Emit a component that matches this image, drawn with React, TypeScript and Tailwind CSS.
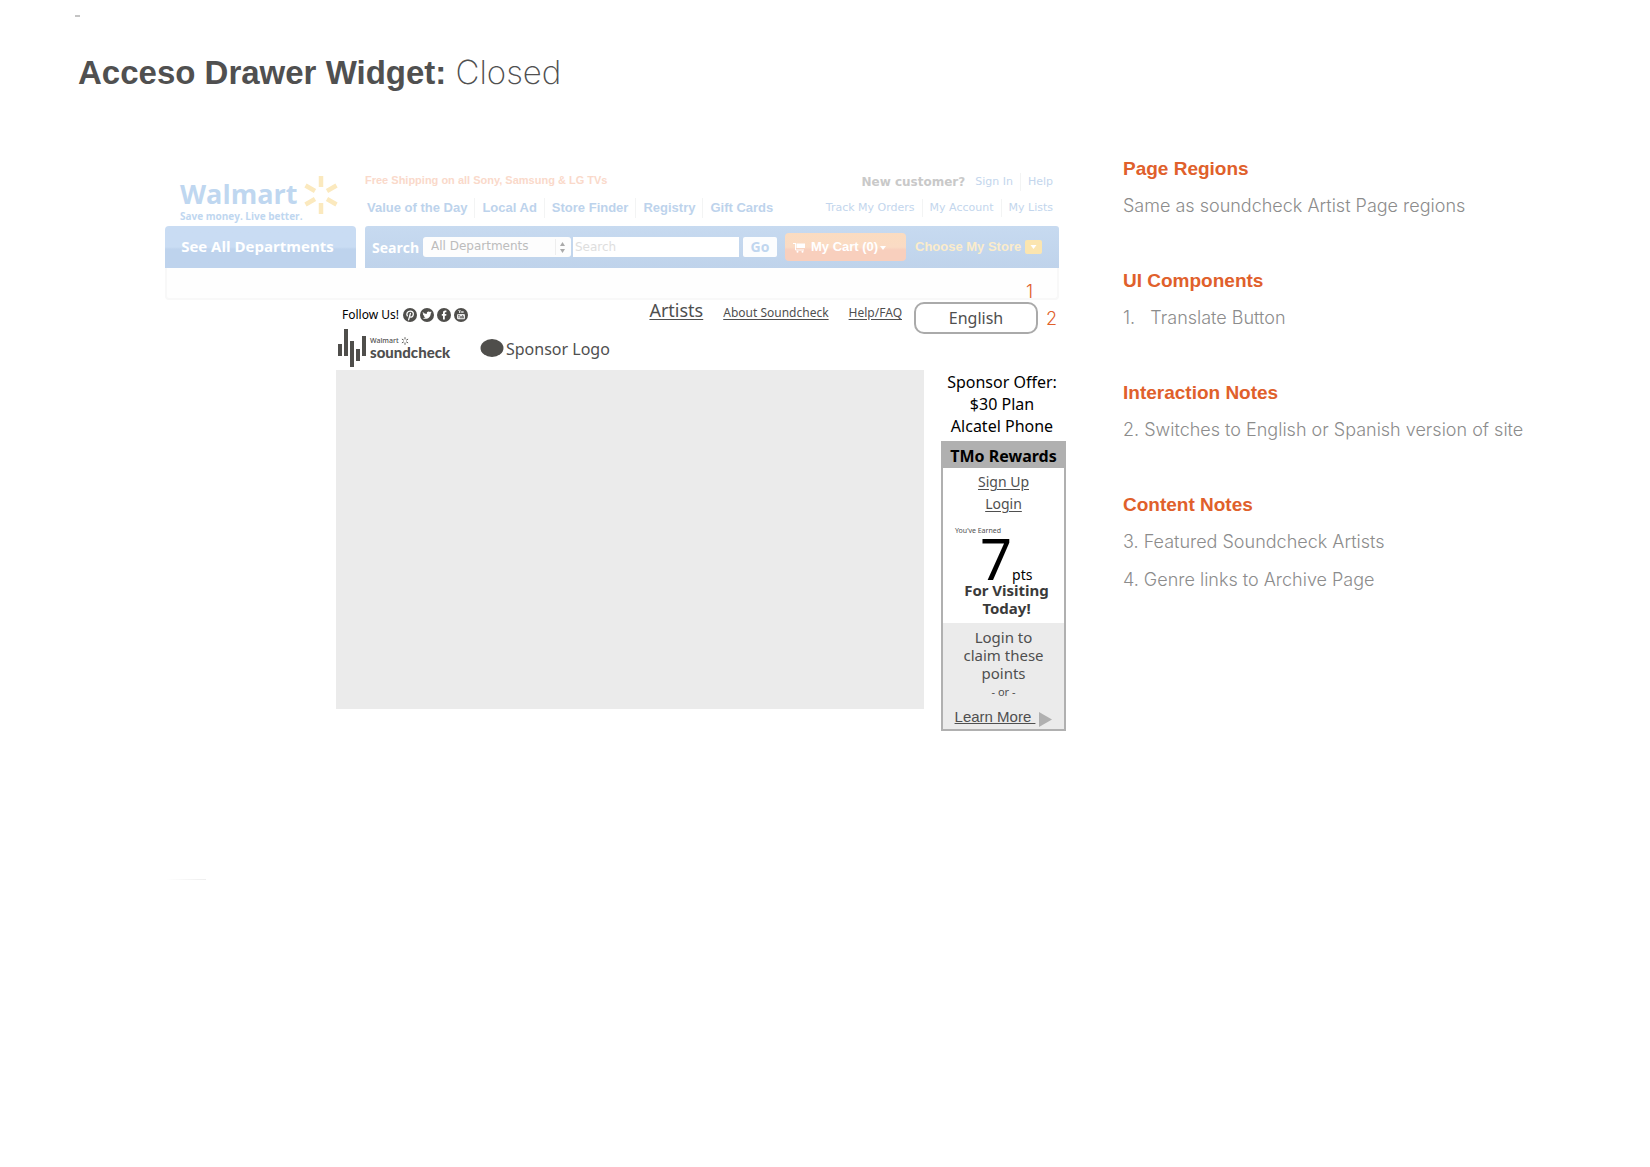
import React from "react";

const myriad = "font-['Noto_Sans',sans-serif]";
const verdana = "font-['DejaVu_Sans',sans-serif]";
const humanist = "font-['Open_Sans',sans-serif]";

function Spark({ className, color }: { className: string; color: string }) {
  return (
    <svg viewBox="0 0 36 40" className={className} aria-hidden="true">
      <g stroke={color} strokeWidth="4.5" strokeLinecap="butt">
        <path d="M18 1v11M18 28v11M2.500 10.500l9.500 5.500M24 24l9.500 5.500M2.500 29.500l9.500-5.500M24 16l9.500-5.500" />
      </g>
    </svg>
  );
}

function Divided({ items, className }: { items: string[]; className: string }) {
  return (
    <nav className={`flex items-center whitespace-nowrap ${className}`}>
      {items.map((t, i) => (
        <a key={t} href="#" className={i ? "ml-[7px] border-l border-[#f3f4f4] pl-[7px]" : ""}>
          {t}
        </a>
      ))}
    </nav>
  );
}

function StoreHeader() {
  return (
    <div className="mr-[7px]">
      <div className="flex h-[55px]">
        <div className="flex w-[200px] gap-1 pl-[15px]">
          <div className={`${humanist} text-[#bfd7f0]`}>
            <div className="mt-1 h-[34px] text-[27px] leading-[38px] font-bold">Walmart</div>
            <div className="text-[10px] leading-[14px] font-bold whitespace-nowrap">Save money. Live better.</div>
          </div>
          <Spark color="#fbe9be" className="mt-1 -ml-1 h-10 w-9 shrink-0" />
        </div>
        <div className="flex flex-1 justify-between">
          <div className="font-['Liberation_Sans',sans-serif] font-bold">
            <p className="mt-0.5 text-[11px] leading-[14px] text-[#fad9ca]">Free Shipping on all Sony, Samsung &amp; LG TVs</p>
            <Divided
              className="mt-[11px] pl-0.5 text-[13px] leading-[20px] text-[#bdd3ec]"
              items={["Value of the Day", "Local Ad", "Store Finder", "Registry", "Gift Cards"]}
            />
          </div>
          <div className={`${verdana} flex flex-col items-end pr-1.5 text-[#c3d6ed]`}>
            <div className="mt-0.5 flex items-center gap-2.5 text-[11px] leading-[18px]">
              <span className="text-[12px] font-bold text-[#c9c9c9]">New customer?</span>
              <Divided className="" items={["Sign In", "Help"]} />
            </div>
            <Divided className="mt-2 text-[11px] leading-[18px]" items={["Track My Orders", "My Account", "My Lists"]} />
          </div>
        </div>
      </div>
      <div className="flex h-[42px] gap-[9px]">
        <button className={`${humanist} w-[191px] rounded-t-[4px] bg-linear-to-b from-[#c9dcf3] from-0% via-[#c9dcf3] via-50% to-[#bed3ed] to-55% pr-1.5 pb-0.5 text-[15px] font-bold text-white`}>
          See All Departments
        </button>
        <form className="flex flex-1 items-center rounded-t-[3px] bg-linear-to-b from-[#c7daf0] to-[#bfd3eb] pl-[7px]">
          <label htmlFor="query" className={`${humanist} w-[51px] text-[14px] font-bold text-white`}>
            Search
          </label>
          <div className="relative w-[148px]">
            <select aria-label="Department" className={`${verdana} block h-5 w-full appearance-none rounded-[3px] bg-[#fdfdfd] pb-0.5 pl-2 text-[12px] text-[#bcbcbc]`}>
              <option>All Departments</option>
            </select>
            <svg viewBox="0 0 12 20" className="pointer-events-none absolute top-0 right-1 h-5 w-3" aria-hidden="true">
              <path d="M0.500 2v16" stroke="#eee" />
              <path d="M5 9l2.500-4 2.500 4zM5 12l2.500 4 2.500-4z" fill="#aaa" />
            </svg>
          </div>
          <input id="query" placeholder="Search" className={`${verdana} ml-0.5 h-5 w-[166px] min-w-0 bg-white pl-0.5 text-[12px] placeholder:text-[#dedede]`} />
          <button type="button" className={`${humanist} ml-1 h-5 w-[34px] rounded-[2px] bg-[#fcfdfe] text-[14px] leading-5 font-bold text-[#c0d6ef]`}>
            Go
          </button>
          <button type="button" className="ml-2 flex h-[28px] w-[121px] items-center gap-1.5 rounded-[4px] bg-linear-to-b from-[#fbdcc0] from-0% via-[#fadbc4] via-50% to-[#f8cfbd] to-60% pl-2 font-['Liberation_Sans',sans-serif] text-[13px] font-bold whitespace-nowrap text-white">
            <svg viewBox="0 0 12 11" className="h-[11px] w-3" aria-hidden="true">
              <path d="M0 1.500h3M2.500 1.500v6.500H11" fill="none" stroke="#fff" />
              <path d="M3.500 1.500H12V6H3.500z" fill="#fff" />
              <circle cx="4.500" cy="9.800" r="1" fill="#fff" />
              <circle cx="9.500" cy="9.800" r="1" fill="#fff" />
            </svg>
            <span>
              My Cart (0)
              <svg viewBox="0 0 6 4" className="ml-0.5 inline h-1 w-1.5 align-middle" aria-hidden="true">
                <path d="M0 0h6L3 4z" fill="#fff" />
              </svg>
            </span>
          </button>
          <button type="button" className="ml-[9px] flex items-center gap-1 font-['Liberation_Sans',sans-serif] text-[13px] font-bold whitespace-nowrap text-[#fbeccb]">
            Choose My Store
            <svg viewBox="0 0 17 14" className="h-3.5 w-[17px]" aria-hidden="true">
              <rect width="17" height="14" rx="2" fill="#fbe5b0" />
              <path d="M5.500 5h6l-3 4z" fill="#fff" />
            </svg>
          </button>
        </form>
      </div>
      <div className="h-8 rounded-b-[4px] border-x-2 border-b-2 border-[#f8f8f8] bg-[#fefefe]" />
    </div>
  );
}

function SocialIcons() {
  return (
    <div className="flex gap-[3px]">
      <a href="#" aria-label="Pinterest">
        <svg viewBox="0 0 14 14" className="size-3.5">
          <circle cx="7" cy="7" r="7" fill="#4f4e4b" />
          <path d="M4.300 7.900C3 5.700 4.600 3.100 7.200 3.100c2.100 0 3.300 1.300 3.100 3.100-.2 1.900-1.300 3-2.500 2.900-.9 0-1.300-.7-1.100-1.500M7.400 5.300L5.600 11.800" fill="none" stroke="#fff" strokeWidth="1.300" strokeLinecap="round" />
        </svg>
      </a>
      <a href="#" aria-label="Twitter">
        <svg viewBox="0 0 14 14" className="size-3.5">
          <circle cx="7" cy="7" r="7" fill="#4f4e4b" />
          <path d="M2.800 4c1.200 1.300 2.500 1.900 4 2-.3-1.600.6-2.600 1.800-2.600.6 0 1 .2 1.400.6l1.400-.5-.6 1.100.9-.2-1 1.100c.1 3-2.200 5.300-5 5.300-1.200 0-2.200-.3-3-.9 1.100.1 2-.1 2.700-.7-.8-.1-1.500-.6-1.700-1.400h.8C3.500 7.400 3 6.700 2.900 5.800l.8.200C2.900 5.400 2.500 4.800 2.800 4z" fill="#fff" />
        </svg>
      </a>
      <a href="#" aria-label="Facebook">
        <svg viewBox="0 0 14 14" className="size-3.5">
          <circle cx="7" cy="7" r="7" fill="#4f4e4b" />
          <path d="M6 11.500V7.700H4.800V6H6V4.900c0-1.500.9-2.300 2.200-2.300h1.200v1.700h-.8c-.6 0-.8.2-.8.800V6h1.600l-.2 1.700H7.800v3.800z" fill="#fff" />
        </svg>
      </a>
      <a href="#" aria-label="YouTube">
        <svg viewBox="0 0 14 14" className="size-3.5">
          <circle cx="7" cy="7" r="7" fill="#4f4e4b" />
          <path d="M4.500 2l1 1.500V5M6.400 2L5.500 3.500M7 3.300v1.400M9 3v2M8 3v2" stroke="#fff" strokeWidth=".8" fill="none" />
          <rect x="3" y="6" width="8" height="5.200" rx="1.300" fill="#e9e9e9" />
          <path d="M4 7.300h1.800M4.900 7.300V10M6.500 8v2h1V8M8.500 7v3h1V8.300h-1" stroke="#4f4e4b" strokeWidth=".6" fill="none" />
        </svg>
      </a>
    </div>
  );
}

function SiteNav() {
  return (
    <div className={`${myriad} relative flex h-[70px] justify-between pl-[171px] text-[#4f4f4f]`}>
      <div>
        <div className="mt-[7px] flex items-center gap-1 pl-1.5">
          <span className="text-[12px] leading-[16px] text-black">Follow Us!</span>
          <SocialIcons />
        </div>
        <div className="mt-1.5 flex items-center pl-0.5">
          <svg viewBox="0 0 29 38" className="h-[38px] w-[29px]" aria-hidden="true">
            <path d="M0 15h4v12H0zM6 0h4v27H6zM12 12h4v26h-4zM18 20h4v12h-4zM24 7h4v20h-4z" fill="#4f4e4b" />
          </svg>
          <div className="ml-[3px] w-[110px]">
            <div className="flex items-center text-[7px] leading-[8px] font-medium">
              Walmart
              <Spark color="#4f4e4b" className="ml-0.5 size-2" />
            </div>
            <div className="font-['Lato',sans-serif] text-[15px] leading-[14px] font-black">soundcheck</div>
          </div>
          <svg viewBox="0 0 24 18" className="h-[18px] w-6" aria-hidden="true">
            <ellipse cx="12" cy="9" rx="11.500" ry="9" fill="#4f4e4b" />
          </svg>
          <span className="ml-0.5 pt-0.5 text-[16px] leading-[20px] whitespace-nowrap">Sponsor Logo</span>
        </div>
      </div>
      <div className="flex items-start">
        <nav className="mr-3 flex h-6 items-end gap-5 whitespace-nowrap">
          <a href="#" className="text-[18px] leading-[28px] underline underline-offset-2">Artists</a>
          <a href="#" className="text-[12px] leading-[22px] underline underline-offset-2">About Soundcheck</a>
          <a href="#" className="text-[12px] leading-[22px] underline underline-offset-2">Help/FAQ</a>
        </nav>
        <button className="mt-0.5 mr-[28px] h-8 w-[124px] rounded-[10px] border-2 border-[#aaa] bg-white text-[16px] leading-none">English</button>
      </div>
      <div className="absolute -top-[17px] right-[33px] font-['Inter',sans-serif] text-[18px] leading-[18px] font-light text-[#e0602b]">1</div>
      <div className="absolute top-[10px] right-[9px] font-['Inter',sans-serif] text-[18px] leading-[18px] font-light text-[#e0602b]">2</div>
    </div>
  );
}

function RewardsSidebar() {
  return (
    <aside className={`${myriad} w-[125px] shrink-0 text-center`}>
      <p className="h-[71px] pt-px pr-[3px] text-[16px] leading-[22px] whitespace-nowrap text-black">
        Sponsor Offer:
        <br />
        $30 Plan
        <br />
        Alcatel Phone
      </p>
      <div className="border-2 border-[#b0b0b0] text-[#4f4f4f]">
        <h2 className="flex h-[25px] justify-center bg-[#b0b0b0] text-[16px] leading-[26px] font-bold whitespace-nowrap text-black">TMo Rewards</h2>
        <div className="flex flex-col items-center pt-[3px] text-[14px] leading-[22px]">
          <a href="#" className="underline underline-offset-2">Sign Up</a>
          <a href="#" className="underline underline-offset-2">Login</a>
        </div>
        <div className="mt-2.5 pl-3 text-left text-[7px] leading-[12px]">You’ve Earned</div>
        <div className="flex h-[42px] items-baseline pl-[37px] text-black">
          <span className="text-[56px] leading-[42px]">7</span>
          <span className="text-[14px]">pts</span>
        </div>
        <p className="h-[44px] pt-0.5 pl-1.5 text-[15px] leading-[18px] font-bold text-[#3a3a3a]">
          For Visiting
          <br />
          Today!
        </p>
        <div className="bg-[#ebebeb] pt-[5px] pb-0.5 text-[15px] leading-[18px]">
          Login to
          <br />
          claim these
          <br />
          points
          <div className="text-[11px] leading-[19px]">- or -</div>
          <div className="mt-1.5 flex items-center justify-center gap-1 font-['Liberation_Sans',sans-serif]">
            <a href="#" className="text-[15px] leading-[20px] whitespace-pre underline">{"Learn More "}</a>
            <svg viewBox="0 0 13 15" className="mt-1 h-[15px] w-[13px]" aria-hidden="true">
              <path d="M0 0l13 7.500L0 15z" fill="#b0b0b0" />
            </svg>
          </div>
        </div>
      </div>
    </aside>
  );
}

const notes = [
  { title: "Page Regions", lines: ["Same as soundcheck Artist Page regions"] },
  { title: "UI Components", lines: ["1.   Translate Button"] },
  { title: "Interaction Notes", lines: ["2. Switches to English or Spanish version of site"] },
  { title: "Content Notes", lines: ["3. Featured Soundcheck Artists", "4. Genre links to Archive Page"] },
];

export default function App() {
  return (
    <div className="min-h-screen bg-white font-['Liberation_Sans',sans-serif]">
      <header className="pt-[15px] pl-[75px]">
        <div className="h-0.5 w-[5px] bg-[#c4c4c4]" />
        <h1 className="mt-[34px] pl-[3px] text-[33px] leading-[42px] font-bold whitespace-nowrap text-[#505050]">
          Acceso Drawer Widget: <span className="font-['Inter',sans-serif] text-[33px] font-extralight">Closed</span>
        </h1>
      </header>
      <main className="mt-[63px] grid grid-cols-[minmax(0,901fr)_minmax(0,422fr)] gap-[57px] pr-[105px] pl-[165px]">
        <section className="pt-[14px]">
          <StoreHeader />
          <SiteNav />
          <div className="flex items-start gap-[17px] pl-[171px]">
            <div className="h-[339px] flex-1 bg-[#ebebeb]" />
            <RewardsSidebar />
          </div>
        </section>
        <section className="flex flex-col gap-[51px]">
          {notes.map((n) => (
            <div key={n.title}>
              <h2 className="text-[19px] leading-[23px] font-bold text-[#e0602b]">{n.title}</h2>
              {n.lines.map((l) => (
                <p key={l} className="mt-3.5 font-['Inter',sans-serif] text-[18px] leading-[24px] font-light whitespace-pre text-[#8c8c8c]">
                  {l}
                </p>
              ))}
            </div>
          ))}
        </section>
      </main>
      <div className="mt-[148px] ml-[165px] h-px w-[41px] bg-linear-to-r from-white to-[#eee]" />
    </div>
  );
}
